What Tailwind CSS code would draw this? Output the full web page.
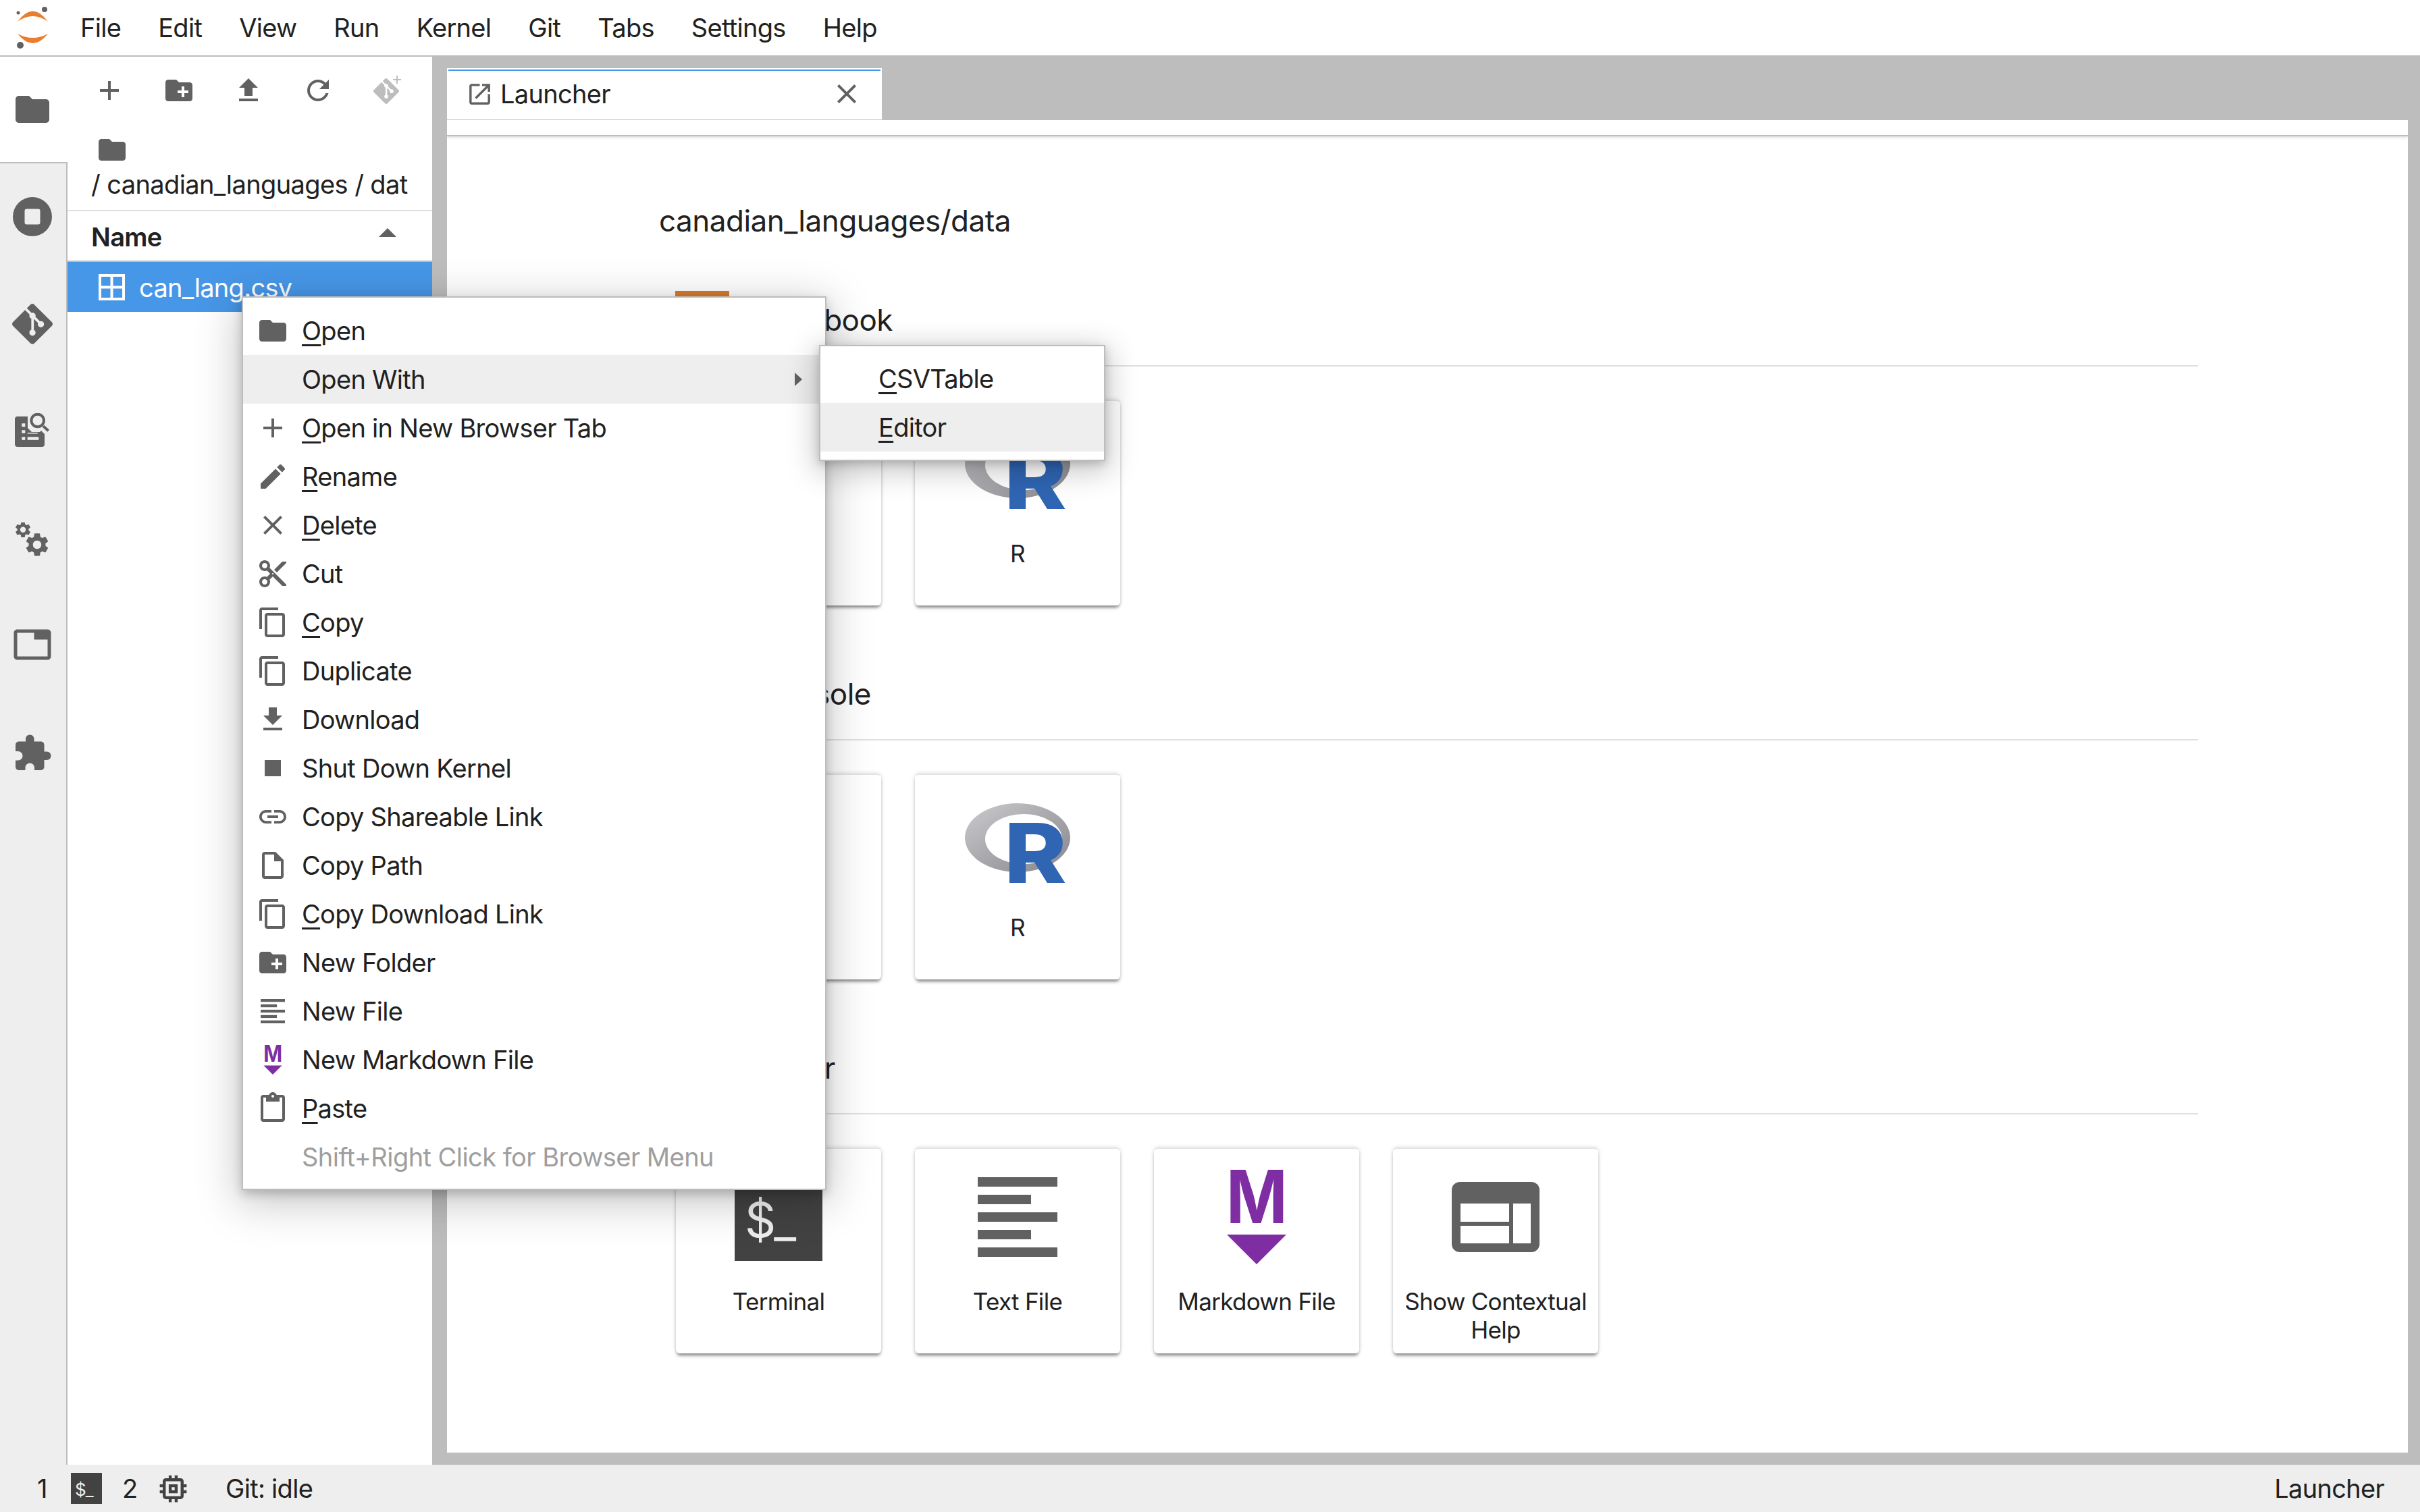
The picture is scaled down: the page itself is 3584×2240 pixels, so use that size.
<!DOCTYPE html>
<html lang="en">
<head>
  <meta charset="UTF-8" />
  <title>JupyterLab</title>
  <script src="https://cdn.jsdelivr.net/npm/@tailwindcss/browser@4"></script>
</head>
<body class="bg-white">
<div class="relative w-[3584px] h-[2240px] overflow-hidden flex flex-col font-['Inter',sans-serif] text-[38px] tracking-[-0.7px] text-[#212121]">

  <!-- TOP MENU -->
  <div class="h-[84px] shrink-0 border-b-2 border-[#bdbdbd] flex items-center">
    <svg class="w-[60px] h-[70px] ml-[18px] mr-[41px] shrink-0" viewBox="18 5 60 70">
      <path fill="#e97f2e" d="M26 31Q48.500 0 71 31Q48.500 15 26 31z"/>
      <path fill="#e97f2e" d="M26 49Q48.500 77 71 49Q48.500 61 26 49z"/>
      <circle cx="66" cy="13" r="4" fill="#616161"/>
      <circle cx="27" cy="18" r="2.500" fill="#616161"/>
      <circle cx="30" cy="66" r="5" fill="#616161"/>
    </svg>
    <div class="flex gap-[55px]">
      <span>File</span><span>Edit</span><span>View</span><span>Run</span><span>Kernel</span><span>Git</span><span>Tabs</span><span>Settings</span><span>Help</span>
    </div>
  </div>

  <div class="flex-1 flex min-h-0">
    <!-- LEFT ICON BAR -->
    <div class="w-[100px] shrink-0 flex flex-col">
      <div class="h-[156px] shrink-0 bg-white flex items-center justify-center pr-[4px]">
        <svg class="w-[60px] h-[60px]" viewBox="0 0 24 24" fill="#616161"><path d="M10 4H4c-1.100 0-1.990.900-1.990 2L2 18c0 1.100.900 2 2 2h16c1.100 0 2-.900 2-2V8c0-1.100-.900-2-2-2h-8l-2-2z"/></svg>
      </div>
      <div class="flex-1 bg-[#eeeeee] border-t-2 border-r-2 border-[#bdbdbd] flex flex-col pr-[2px]">
        <div class="h-[159px] -mt-[1px] flex items-center justify-center">
          <svg class="w-[58px] h-[58px]" viewBox="0 0 58 58"><circle cx="29" cy="29" r="29" fill="#616161"/><rect x="17.500" y="17.500" width="23" height="23" rx="3" fill="#eeeeee"/></svg>
        </div>
        <div class="h-[159px] flex items-center justify-center">
          <svg class="w-[60px] h-[60px]" viewBox="0 0 24 24" fill="#616161"><path d="M23.546 10.930L13.067.452c-.604-.603-1.582-.603-2.188 0L8.708 2.627l2.760 2.760c.645-.215 1.379-.070 1.889.441.516.515.658 1.258.438 1.900l2.658 2.660c.645-.223 1.387-.078 1.900.435.721.720.721 1.884 0 2.604-.719.719-1.881.719-2.600 0-.539-.541-.674-1.337-.404-1.996L12.860 8.955v6.525c.176.086.342.203.488.348.713.721.713 1.883 0 2.600-.719.721-1.889.721-2.609 0-.719-.719-.719-1.879 0-2.598.182-.180.387-.316.605-.406V8.835c-.217-.091-.424-.222-.600-.401-.545-.545-.676-1.342-.396-2.009L7.636 3.700.450 10.881c-.600.605-.600 1.584 0 2.189l10.480 10.477c.604.604 1.582.604 2.186 0l10.430-10.430c.605-.603.605-1.582 0-2.187"/></svg>
        </div>
        <div class="h-[159px] -mt-[2px] flex items-center justify-center">
          <svg class="w-[52px] h-[50px]" viewBox="0 0 52 50">
            <path fill="#616161" d="M4 5H19V22L25 28H37L39 26L44 31V46a4 4 0 0 1-4 4H4a4 4 0 0 1-4-4V9a4 4 0 0 1 4-4z"/>
            <rect x="10.300" y="15.300" width="5" height="5" fill="#eeeeee"/><rect x="10.300" y="25.300" width="5" height="4.500" fill="#eeeeee"/><rect x="10.300" y="35.300" width="5" height="4.500" fill="#eeeeee"/><rect x="18.700" y="35.300" width="16.600" height="4.500" fill="#eeeeee"/><rect x="18.700" y="29" width="15" height="1.500" fill="#eeeeee"/>
            <circle cx="33.700" cy="11" r="9.300" fill="none" stroke="#616161" stroke-width="4"/>
            <path d="M42 19.300L49.700 26.300" stroke="#616161" stroke-width="4"/>
          </svg>
        </div>
        <div class="h-[159px] mt-[4px] flex items-center justify-center">
          <svg class="w-[52px] h-[52px]" viewBox="0 0 52 52" fill="#616161">
            <g transform="translate(-2 -3.340) scale(1.170)"><path d="M19.140 12.940c.040-.300.060-.610.060-.940 0-.320-.020-.640-.070-.940l2.030-1.580c.180-.140.230-.410.120-.610l-1.920-3.320c-.120-.220-.370-.290-.590-.220l-2.390.960c-.500-.380-1.030-.700-1.620-.940l-.360-2.540c-.040-.240-.240-.410-.480-.410h-3.840c-.240 0-.430.170-.470.410l-.360 2.540c-.590.240-1.130.570-1.620.940l-2.390-.960c-.220-.080-.470 0-.590.220L2.740 8.870c-.120.210-.080.470.120.610l2.030 1.580c-.050.300-.090.630-.090.940s.020.640.070.940l-2.030 1.580c-.180.140-.230.410-.120.610l1.920 3.320c.120.220.370.290.590.220l2.390-.960c.500.380 1.030.700 1.620.940l.360 2.540c.050.240.240.410.480.410h3.840c.240 0 .440-.170.470-.410l.360-2.540c.590-.240 1.130-.560 1.620-.940l2.390.960c.220.080.470 0 .590-.220l1.920-3.320c.120-.220.070-.470-.120-.610l-2.010-1.580zM12 15.600c-1.980 0-3.600-1.620-3.600-3.600s1.620-3.600 3.600-3.600 3.600 1.620 3.600 3.600-1.620 3.600-3.600 3.600z"/></g>
            <g transform="translate(12.200 12.200) scale(1.730)"><path d="M19.140 12.940c.040-.300.060-.610.060-.940 0-.320-.020-.640-.070-.940l2.030-1.580c.180-.140.230-.410.120-.610l-1.920-3.320c-.120-.220-.370-.290-.590-.220l-2.390.960c-.500-.380-1.030-.700-1.620-.940l-.360-2.540c-.040-.240-.240-.410-.480-.410h-3.840c-.240 0-.430.170-.470.410l-.360 2.540c-.590.240-1.130.570-1.620.940l-2.390-.960c-.220-.080-.470 0-.590.220L2.740 8.870c-.120.210-.080.470.120.610l2.030 1.580c-.050.300-.090.630-.090.940s.020.640.070.940l-2.030 1.580c-.180.140-.230.410-.120.610l1.920 3.320c.120.220.370.290.590.220l2.390-.960c.500.380 1.030.700 1.620.940l.360 2.540c.050.240.240.410.480.410h3.840c.240 0 .440-.170.470-.410l.360-2.540c.590-.240 1.130-.560 1.620-.940l2.390.960c.220.080.470 0 .590-.220l1.920-3.320c.120-.220.070-.470-.120-.610l-2.010-1.580zM12 15.600c-1.980 0-3.600-1.620-3.600-3.600s1.620-3.600 3.600-3.600 3.600 1.620 3.600 3.600-1.620 3.600-3.600 3.600z"/></g>
          </svg>
        </div>
        <div class="h-[159px] -mt-[4px] flex items-center justify-center">
          <svg class="w-[60px] h-[60px]" viewBox="0 0 24 24" fill="#616161"><path d="M21 3H3c-1.100 0-2 .900-2 2v14c0 1.100.900 2 2 2h18c1.100 0 2-.900 2-2V5c0-1.100-.900-2-2-2zm0 16H3V5h10v4h8v10z"/></svg>
        </div>
        <div class="h-[159px] mt-[2px] flex items-center justify-center">
          <svg class="w-[60px] h-[60px]" viewBox="0 0 24 24" fill="#616161"><path d="M20.500 11H19V7c0-1.100-.900-2-2-2h-4V3.500C13 2.120 11.880 1 10.500 1S8 2.120 8 3.500V5H4c-1.100 0-1.990.900-1.990 2v3.800H3.500c1.490 0 2.700 1.210 2.700 2.700s-1.210 2.700-2.700 2.700H2V20c0 1.100.900 2 2 2h3.800v-1.500c0-1.490 1.210-2.700 2.700-2.700 1.490 0 2.700 1.210 2.700 2.700V22H17c1.100 0 2-.900 2-2v-4h1.500c1.380 0 2.500-1.120 2.500-2.500S21.880 11 20.500 11z"/></svg>
        </div>
      </div>
    </div>

    <!-- FILE BROWSER -->
    <div class="w-[540px] shrink-0 bg-white flex flex-col">
      <div class="h-[100px] shrink-0 flex items-center pl-[10px]">
        <div class="w-[103px] flex justify-center"><svg class="w-[48px] h-[48px]" viewBox="0 0 24 24" fill="#616161"><path d="M19 13h-6v6h-2v-6H5v-2h6V5h2v6h6v2z"/></svg></div>
        <div class="w-[103px] flex justify-center"><svg class="w-[48px] h-[48px]" viewBox="0 0 24 24" fill="#616161"><path d="M20 6h-8l-2-2H4c-1.110 0-1.990.890-1.990 2L2 18c0 1.110.890 2 2 2h16c1.110 0 2-.890 2-2V8c0-1.110-.890-2-2-2zm-1 8h-3v3h-2v-3h-3v-2h3V9h2v3h3v2z"/></svg></div>
        <div class="w-[103px] flex justify-center"><svg class="w-[48px] h-[48px]" viewBox="0 0 24 24" fill="#616161"><path d="M9 16h6v-6h4l-7-7-7 7h4zm-4 2h14v2H5z"/></svg></div>
        <div class="w-[103px] flex justify-center"><svg class="w-[48px] h-[48px]" viewBox="0 0 24 24" fill="#616161"><path d="M17.650 6.350C16.200 4.900 14.210 4 12 4c-4.420 0-7.990 3.580-7.990 8s3.570 8 7.990 8c3.730 0 6.840-2.550 7.730-6h-2.080c-.820 2.330-3.040 4-5.650 4-3.310 0-6-2.690-6-6s2.690-6 6-6c1.660 0 3.140.690 4.220 1.780L13 11h7V4l-2.350 2.350z"/></svg></div>
        <div class="w-[103px] flex justify-center">
          <svg class="w-[44px] h-[44px]" viewBox="0 0 44 44">
            <g transform="translate(1 4) scale(1.580)"><path fill="#bdbdbd" d="M23.546 10.930L13.067.452c-.604-.603-1.582-.603-2.188 0L8.708 2.627l2.760 2.760c.645-.215 1.379-.070 1.889.441.516.515.658 1.258.438 1.900l2.658 2.660c.645-.223 1.387-.078 1.900.435.721.720.721 1.884 0 2.604-.719.719-1.881.719-2.600 0-.539-.541-.674-1.337-.404-1.996L12.860 8.955v6.525c.176.086.342.203.488.348.713.721.713 1.883 0 2.600-.719.721-1.889.721-2.609 0-.719-.719-.719-1.879 0-2.598.182-.180.387-.316.605-.406V8.835c-.217-.091-.424-.222-.600-.401-.545-.545-.676-1.342-.396-2.009L7.636 3.700.450 10.881c-.600.605-.600 1.584 0 2.189l10.480 10.477c.604.604 1.582.604 2.186 0l10.430-10.430c.605-.603.605-1.582 0-2.187"/></g>
            <path d="M36 0v12M30 6h12" stroke="#bdbdbd" stroke-width="2"/>
          </svg>
        </div>
      </div>
      <div class="h-[127px] shrink-0 pl-[35px] pr-[33px] overflow-hidden">
        <svg class="w-[48px] h-[48px] ml-[7px] mt-[14px]" viewBox="0 0 24 24" fill="#616161"><path d="M10 4H4c-1.100 0-1.990.900-1.990 2L2 18c0 1.100.900 2 2 2h16c1.100 0 2-.900 2-2V8c0-1.100-.900-2-2-2h-8l-2-2z"/></svg>
        <div class="whitespace-nowrap leading-[46px] mt-[4px] tracking-[-0.6px] overflow-hidden">/ canadian_languages / dat</div>
      </div>
      <div class="h-[77px] shrink-0 border-t-2 border-b-2 border-t-[#e0e0e0] border-b-[#bdbdbd] flex items-center justify-between pl-[35px] pr-[53px] pt-[4px] font-semibold">
        <span>Name</span>
        <svg class="w-[26px] h-[13px] -mt-[14px]" viewBox="0 0 26 13" fill="#616161"><path d="M13 0L26 13H0z"/></svg>
      </div>
      <div class="h-[74px] shrink-0 bg-[#4797e8] text-white flex items-center pl-[46px]">
        <svg class="w-[39px] h-[39px] mr-[21px]" viewBox="0 0 39 39" fill="none" stroke="#ffffff" stroke-width="4"><path d="M2 2h35v35H2zM19.500 2v35M2 19.500h35"/></svg>
        <span class="mt-[3px]">can_lang.csv</span>
      </div>
    </div>

    <!-- MAIN AREA -->
    <div class="flex-1 min-w-0 bg-[#bdbdbd] pl-[22px] pr-[18px] pb-[18px] flex flex-col">
      <div class="h-[94px] shrink-0 flex items-end border-b border-[#bdbdbd]">
        <div class="w-[644px] h-[76px] bg-white pt-[2px] px-[2px]">
          <div class="h-[2px] bg-[#4797e8]"></div>
          <div class="flex items-center h-[68px] pl-[26px] pr-[26px]">
            <svg class="w-[41px] h-[41px] mr-[10px] shrink-0" viewBox="0 0 24 24" fill="#616161"><path d="M19 19H5V5h7V3H5c-1.110 0-2 .900-2 2v14c0 1.100.890 2 2 2h14c1.100 0 2-.900 2-2v-7h-2v7zM14 3v2h3.590l-9.830 9.830 1.410 1.410L19 6.410V10h2V3h-7z"/></svg>
            <span class="flex-1">Launcher</span>
            <svg class="w-[48px] h-[48px]" viewBox="0 0 24 24" fill="#616161"><path d="M19 6.410L17.590 5 12 10.590 6.410 5 5 6.410 10.590 12 5 17.590 6.410 19 12 13.410 17.590 19 19 17.590 13.410 12z"/></svg>
          </div>
        </div>
      </div>
      <div class="flex-1 min-h-0 bg-white overflow-hidden">
        <div class="h-[24px] border-b-2 border-[#bdbdbd] shadow-[0_2px_4px_rgba(0,0,0,0.12)]"></div>

        <!-- LAUNCHER BODY -->
        <div class="pl-[314px] pr-[311px]">
          <h1 class="text-[44px] leading-[60px] font-normal tracking-[-0.5px] mt-[95px] mb-[74px]">canadian_languages/data</h1>

          <div class="ml-[25px]">
            <div class="h-[112px] border-b-2 border-[#e0e0e0] flex items-start gap-[43px]">
              <div class="w-[80px] h-[80px] -ml-[1px] bg-[#da7b2f]"></div>
              <span class="text-[44px] leading-[60px] tracking-[-0.5px] mt-[13px]">Notebook</span>
            </div>
            <div class="flex gap-[50px] mt-[49px] mb-[88px]">
              <div class="w-[304px] h-[305px] bg-white rounded-[6px] border-t-2 border-[#e4e4e4] shadow-[0_5px_5px_-2px_rgba(0,0,0,0.45),0_0_6px_rgba(0,0,0,0.15)] flex flex-col items-center">
                <div class="h-[205px]"></div>
                <div class="text-[35px] leading-[42px] text-center">Python 3</div>
              </div>
              <div class="w-[304px] h-[305px] bg-white rounded-[6px] border-t-2 border-[#e4e4e4] shadow-[0_5px_5px_-2px_rgba(0,0,0,0.45),0_0_6px_rgba(0,0,0,0.15)] flex flex-col items-center">
                <div class="h-[205px] pb-[3px] flex items-center justify-center">
                  <svg class="w-[160px] h-[122px] overflow-visible" viewBox="0 0 160 122">
                    <defs><linearGradient id="ring1" x1="0" y1="0" x2="1" y2="1"><stop offset="0" stop-color="#cbcbce"/><stop offset="1" stop-color="#86868b"/></linearGradient></defs>
                    <ellipse cx="80" cy="53" rx="78" ry="51" fill="url(#ring1)"/>
                    <ellipse cx="89" cy="55" rx="57" ry="37" fill="#ffffff"/>
                    <text x="60" y="120" font-family="Inter" font-weight="800" font-size="122" fill="#2f65b3" textLength="92" lengthAdjust="spacingAndGlyphs">R</text>
                  </svg>
                </div>
                <div class="text-[35px] leading-[42px] text-center">R</div>
              </div>
            </div>

            <div class="h-[112px] border-b-2 border-[#e0e0e0] flex items-start gap-[43px]">
              <div class="w-[80px] h-[80px] -ml-[1px] bg-[#616161]"></div>
              <span class="text-[44px] leading-[60px] tracking-[-0.5px] mt-[13px]">Console</span>
            </div>
            <div class="flex gap-[50px] mt-[49px] mb-[88px]">
              <div class="w-[304px] h-[305px] bg-white rounded-[6px] border-t-2 border-[#e4e4e4] shadow-[0_5px_5px_-2px_rgba(0,0,0,0.45),0_0_6px_rgba(0,0,0,0.15)] flex flex-col items-center">
                <div class="h-[205px]"></div>
                <div class="text-[35px] leading-[42px] text-center">Python 3</div>
              </div>
              <div class="w-[304px] h-[305px] bg-white rounded-[6px] border-t-2 border-[#e4e4e4] shadow-[0_5px_5px_-2px_rgba(0,0,0,0.45),0_0_6px_rgba(0,0,0,0.15)] flex flex-col items-center">
                <div class="h-[205px] pb-[3px] flex items-center justify-center">
                  <svg class="w-[160px] h-[122px] overflow-visible" viewBox="0 0 160 122">
                    <defs><linearGradient id="ring2" x1="0" y1="0" x2="1" y2="1"><stop offset="0" stop-color="#cbcbce"/><stop offset="1" stop-color="#86868b"/></linearGradient></defs>
                    <ellipse cx="80" cy="53" rx="78" ry="51" fill="url(#ring2)"/>
                    <ellipse cx="89" cy="55" rx="57" ry="37" fill="#ffffff"/>
                    <text x="60" y="120" font-family="Inter" font-weight="800" font-size="122" fill="#2f65b3" textLength="92" lengthAdjust="spacingAndGlyphs">R</text>
                  </svg>
                </div>
                <div class="text-[35px] leading-[42px] text-center">R</div>
              </div>
            </div>

            <div class="h-[112px] border-b-2 border-[#e0e0e0] flex items-start gap-[43px]">
              <div class="w-[80px] h-[80px] -ml-[1px] bg-[#616161]"></div>
              <span class="text-[44px] leading-[60px] tracking-[-0.5px] mt-[13px]">Other</span>
            </div>
            <div class="flex gap-[50px] mt-[49px]">
              <div class="w-[304px] h-[305px] bg-white rounded-[6px] border-t-2 border-[#e4e4e4] shadow-[0_5px_5px_-2px_rgba(0,0,0,0.45),0_0_6px_rgba(0,0,0,0.15)] flex flex-col items-center">
                <div class="h-[205px] pb-[3px] flex items-center justify-center">
                  <div class="w-[130px] h-[130px] bg-[#424242] text-[#eeeeee] text-[72px] leading-[72px] pl-[15px] pt-[33px] tracking-[-3px] whitespace-nowrap overflow-hidden">$_</div>
                </div>
                <div class="text-[35px] leading-[42px] text-center">Terminal</div>
              </div>
              <div class="w-[304px] h-[305px] bg-white rounded-[6px] border-t-2 border-[#e4e4e4] shadow-[0_5px_5px_-2px_rgba(0,0,0,0.45),0_0_6px_rgba(0,0,0,0.15)] flex flex-col items-center">
                <div class="h-[205px] pb-[3px] flex items-center justify-center">
                  <svg class="w-[118px] h-[118px]" viewBox="0 0 118 118" fill="#616161"><rect width="118" height="14" y="0"/><rect width="79" height="14" y="26"/><rect width="118" height="14" y="52"/><rect width="79" height="14" y="78"/><rect width="118" height="14" y="104"/></svg>
                </div>
                <div class="text-[35px] leading-[42px] text-center">Text File</div>
              </div>
              <div class="w-[304px] h-[305px] bg-white rounded-[6px] border-t-2 border-[#e4e4e4] shadow-[0_5px_5px_-2px_rgba(0,0,0,0.45),0_0_6px_rgba(0,0,0,0.15)] flex flex-col items-center">
                <div class="h-[205px] pb-[3px] flex items-center justify-center">
                  <svg class="w-[90px] h-[140px] overflow-visible" viewBox="0 0 90 140" fill="#7f2da3"><text x="0" y="79" font-family="Inter" font-weight="700" font-size="109" textLength="90" lengthAdjust="spacingAndGlyphs">M</text><path d="M1 96h88l-44 44z"/></svg>
                </div>
                <div class="text-[35px] leading-[42px] text-center">Markdown File</div>
              </div>
              <div class="w-[304px] h-[305px] bg-white rounded-[6px] border-t-2 border-[#e4e4e4] shadow-[0_5px_5px_-2px_rgba(0,0,0,0.45),0_0_6px_rgba(0,0,0,0.15)] flex flex-col items-center">
                <div class="h-[205px] pb-[3px] flex items-center justify-center">
                  <svg class="w-[130px] h-[104px]" viewBox="0 0 130 104"><rect width="130" height="104" rx="12" fill="#616161"/><path fill="#ffffff" d="M13 32h72v27H13zM13 65h72v26H13zM91 32h26v59H91z"/></svg>
                </div>
                <div class="text-[35px] leading-[42px] text-center">Show Contextual Help</div>
              </div>
            </div>
          </div>
        </div>
      </div>
    </div>
  </div>

  <!-- STATUS BAR -->
  <div class="h-[70px] shrink-0 bg-[#eeeeee] flex items-center pl-[55px] pr-[53px]">
    <span class="w-[50px]">1</span>
    <div class="w-[46px] h-[46px] bg-[#424242] text-[#eeeeee] text-[26px] leading-[44px] pl-[6px] pt-[3px] tracking-[-1px] whitespace-nowrap overflow-hidden">$_</div>
    <span class="ml-[30px] w-[42px]">2</span>
    <svg class="w-[53px] h-[53px] ml-[7px] shrink-0" viewBox="0 0 24 24" fill="#424242"><path d="M15 9H9v6h6V9zm-2 4h-2v-2h2v2zm8-2V9h-2V7c0-1.100-.900-2-2-2h-2V3h-2v2h-2V3H9v2H7c-1.100 0-2 .900-2 2v2H3v2h2v2H3v2h2v2c0 1.100.900 2 2 2h2v2h2v-2h2v2h2v-2h2c1.100 0 2-.900 2-2v-2h2v-2h-2v-2h2zm-4 6H7V7h10v10z"/></svg>
    <span class="ml-[51px] flex-1">Git: idle</span>
    <span>Launcher</span>
  </div>

  <!-- CONTEXT MENU -->
  <div class="absolute left-[358px] top-[439px] w-[866px] bg-white border-2 border-[#bdbdbd] pt-[13px] pb-[11px] shadow-[0_14px_60px_6px_rgba(0,0,0,0.22),0_6px_14px_rgba(0,0,0,0.2)]">
    <div class="h-[72px] flex items-center pl-[20px]"><svg class="w-[48px] h-[48px] mr-[19px]" viewBox="0 0 24 24" fill="#616161"><path d="M10 4H4c-1.100 0-1.990.900-1.990 2L2 18c0 1.100.900 2 2 2h16c1.100 0 2-.900 2-2V8c0-1.100-.900-2-2-2h-8l-2-2z"/></svg><span><u class="underline-offset-[6px]">O</u>pen</span></div>
    <div class="h-[72px] flex items-center pl-[87px] pr-[34px] bg-[#eeeeee] justify-between"><span>Open With</span><svg class="w-[11px] h-[20px]" viewBox="0 0 11 20" fill="#616161"><path d="M0 0l11 10L0 20z"/></svg></div>
    <div class="h-[72px] flex items-center pl-[20px]"><svg class="w-[48px] h-[48px] mr-[19px]" viewBox="0 0 24 24" fill="#616161"><path d="M19 13h-6v6h-2v-6H5v-2h6V5h2v6h6v2z"/></svg><span><u class="underline-offset-[6px]">O</u>pen in New Browser Tab</span></div>
    <div class="h-[72px] flex items-center pl-[20px]"><svg class="w-[48px] h-[48px] mr-[19px]" viewBox="0 0 24 24" fill="#616161"><path d="M3 17.250V21h3.750L17.810 9.940l-3.750-3.750L3 17.250zM20.710 7.040c.390-.390.390-1.020 0-1.410l-2.340-2.340c-.390-.390-1.020-.390-1.410 0l-1.830 1.830 3.750 3.750 1.830-1.830z"/></svg><span><u class="underline-offset-[6px]">R</u>ename</span></div>
    <div class="h-[72px] flex items-center pl-[20px]"><svg class="w-[48px] h-[48px] mr-[19px]" viewBox="0 0 24 24" fill="#616161"><path d="M19 6.410L17.590 5 12 10.590 6.410 5 5 6.410 10.590 12 5 17.590 6.410 19 12 13.410 17.590 19 19 17.590 13.410 12z"/></svg><span><u class="underline-offset-[6px]">D</u>elete</span></div>
    <div class="h-[72px] flex items-center pl-[20px]"><svg class="w-[48px] h-[48px] mr-[19px]" viewBox="0 0 24 24" fill="#616161"><path d="M9.640 7.640c.230-.500.360-1.050.360-1.640 0-2.210-1.790-4-4-4S2 3.790 2 6s1.790 4 4 4c.590 0 1.140-.130 1.640-.360L10 12l-2.360 2.360C7.140 14.130 6.590 14 6 14c-2.210 0-4 1.790-4 4s1.790 4 4 4 4-1.790 4-4c0-.590-.130-1.140-.360-1.640L12 14l7 7h3v-1L9.640 7.640zM6 8c-1.100 0-2-.890-2-2s.900-2 2-2 2 .890 2 2-.900 2-2 2zm0 12c-1.100 0-2-.890-2-2s.900-2 2-2 2 .890 2 2-.900 2-2 2zm6-7.500c-.280 0-.500-.220-.500-.500s.220-.500.500-.500.500.220.500.500-.220.500-.500.500zM19 3l-6 6 2 2 7-7V3z"/></svg><span>Cut</span></div>
    <div class="h-[72px] flex items-center pl-[20px]"><svg class="w-[48px] h-[48px] mr-[19px]" viewBox="0 0 24 24" fill="#616161"><path d="M16 1H4c-1.100 0-2 .900-2 2v14h2V3h12V1zm3 4H8c-1.100 0-2 .900-2 2v14c0 1.100.900 2 2 2h11c1.100 0 2-.900 2-2V7c0-1.100-.900-2-2-2zm0 16H8V7h11v14z"/></svg><span><u class="underline-offset-[6px]">C</u>opy</span></div>
    <div class="h-[72px] flex items-center pl-[20px]"><svg class="w-[48px] h-[48px] mr-[19px]" viewBox="0 0 24 24" fill="#616161"><path d="M16 1H4c-1.100 0-2 .900-2 2v14h2V3h12V1zm3 4H8c-1.100 0-2 .900-2 2v14c0 1.100.900 2 2 2h11c1.100 0 2-.900 2-2V7c0-1.100-.900-2-2-2zm0 16H8V7h11v14z"/></svg><span>Duplicate</span></div>
    <div class="h-[72px] flex items-center pl-[20px]"><svg class="w-[48px] h-[48px] mr-[19px]" viewBox="0 0 24 24" fill="#616161"><path d="M19 9h-4V3H9v6H5l7 7 7-7zM5 18v2h14v-2H5z"/></svg><span>Download</span></div>
    <div class="h-[72px] flex items-center pl-[20px]"><svg class="w-[48px] h-[48px] mr-[19px]" viewBox="0 0 24 24" fill="#616161"><path d="M6 6h12v12H6z"/></svg><span>Shut Down Kernel</span></div>
    <div class="h-[72px] flex items-center pl-[20px]"><svg class="w-[48px] h-[48px] mr-[19px]" viewBox="0 0 24 24" fill="#616161"><path d="M3.900 12c0-1.710 1.390-3.100 3.100-3.100h4V7H7c-2.760 0-5 2.240-5 5s2.240 5 5 5h4v-1.900H7c-1.710 0-3.100-1.390-3.100-3.100zM8 13h8v-2H8v2zm9-6h-4v1.900h4c1.710 0 3.100 1.390 3.100 3.100s-1.390 3.100-3.100 3.100h-4V17h4c2.760 0 5-2.240 5-5s-2.240-5-5-5z"/></svg><span>Copy Shareable Link</span></div>
    <div class="h-[72px] flex items-center pl-[20px]"><svg class="w-[48px] h-[48px] mr-[19px]" viewBox="0 0 24 24" fill="#616161"><path d="M14 2H6c-1.100 0-1.990.900-1.990 2L4 20c0 1.100.890 2 1.990 2H18c1.100 0 2-.900 2-2V8l-6-6zM6 20V4h7v5h5v11H6z"/></svg><span>Copy Path</span></div>
    <div class="h-[72px] flex items-center pl-[20px]"><svg class="w-[48px] h-[48px] mr-[19px]" viewBox="0 0 24 24" fill="#616161"><path d="M16 1H4c-1.100 0-2 .900-2 2v14h2V3h12V1zm3 4H8c-1.100 0-2 .900-2 2v14c0 1.100.900 2 2 2h11c1.100 0 2-.900 2-2V7c0-1.100-.900-2-2-2zm0 16H8V7h11v14z"/></svg><span><u class="underline-offset-[6px]">C</u>opy Download Link</span></div>
    <div class="h-[72px] flex items-center pl-[20px]"><svg class="w-[48px] h-[48px] mr-[19px]" viewBox="0 0 24 24" fill="#616161"><path d="M20 6h-8l-2-2H4c-1.110 0-1.990.890-1.990 2L2 18c0 1.110.890 2 2 2h16c1.110 0 2-.890 2-2V8c0-1.110-.890-2-2-2zm-1 8h-3v3h-2v-3h-3v-2h3V9h2v3h3v2z"/></svg><span>New Folder</span></div>
    <div class="h-[72px] flex items-center pl-[26px]"><svg class="w-[36px] h-[36px] mr-[25px]" viewBox="0 0 118 118" fill="#616161"><rect width="118" height="14" y="0"/><rect width="79" height="14" y="26"/><rect width="118" height="14" y="52"/><rect width="79" height="14" y="78"/><rect width="118" height="14" y="104"/></svg><span>New File</span></div>
    <div class="h-[72px] flex items-center pl-[30px]"><svg class="w-[28px] h-[43px] mr-[29px] overflow-visible" viewBox="0 0 90 140" fill="#7f2da3"><text x="0" y="79" font-family="Inter" font-weight="700" font-size="109" textLength="90" lengthAdjust="spacingAndGlyphs">M</text><path d="M1 96h88l-44 44z"/></svg><span>New Markdown File</span></div>
    <div class="h-[72px] flex items-center pl-[20px]"><svg class="w-[48px] h-[48px] mr-[19px]" viewBox="0 0 24 24" fill="#616161"><path d="M19 2h-4.180C14.400.840 13.300 0 12 0c-1.300 0-2.400.840-2.820 2H5c-1.100 0-2 .900-2 2v16c0 1.100.900 2 2 2h14c1.100 0 2-.900 2-2V4c0-1.100-.900-2-2-2zm-7 0c.550 0 1 .450 1 1s-.450 1-1 1-1-.450-1-1 .450-1 1-1zm7 18H5V4h2v3h10V4h2v16z"/></svg><span><u class="underline-offset-[6px]">P</u>aste</span></div>
    <div class="h-[72px] flex items-center pl-[87px] text-[#9e9e9e] tracking-[-0.55px]"><span>Shift+Right Click for Browser Menu</span></div>
  </div>

  <!-- SUBMENU -->
  <div class="absolute left-[1213px] top-[511px] w-[424px] bg-white border-2 border-[#bdbdbd] py-[12px] shadow-[0_10px_40px_6px_rgba(0,0,0,0.22),0_4px_12px_rgba(0,0,0,0.18)]">
    <div class="h-[72px] flex items-center pl-[86px]"><span><u class="underline-offset-[6px]">C</u>SVTable</span></div>
    <div class="h-[72px] flex items-center pl-[86px] bg-[#eeeeee]"><span><u class="underline-offset-[6px]">E</u>ditor</span></div>
  </div>
</div>
</body>
</html>
